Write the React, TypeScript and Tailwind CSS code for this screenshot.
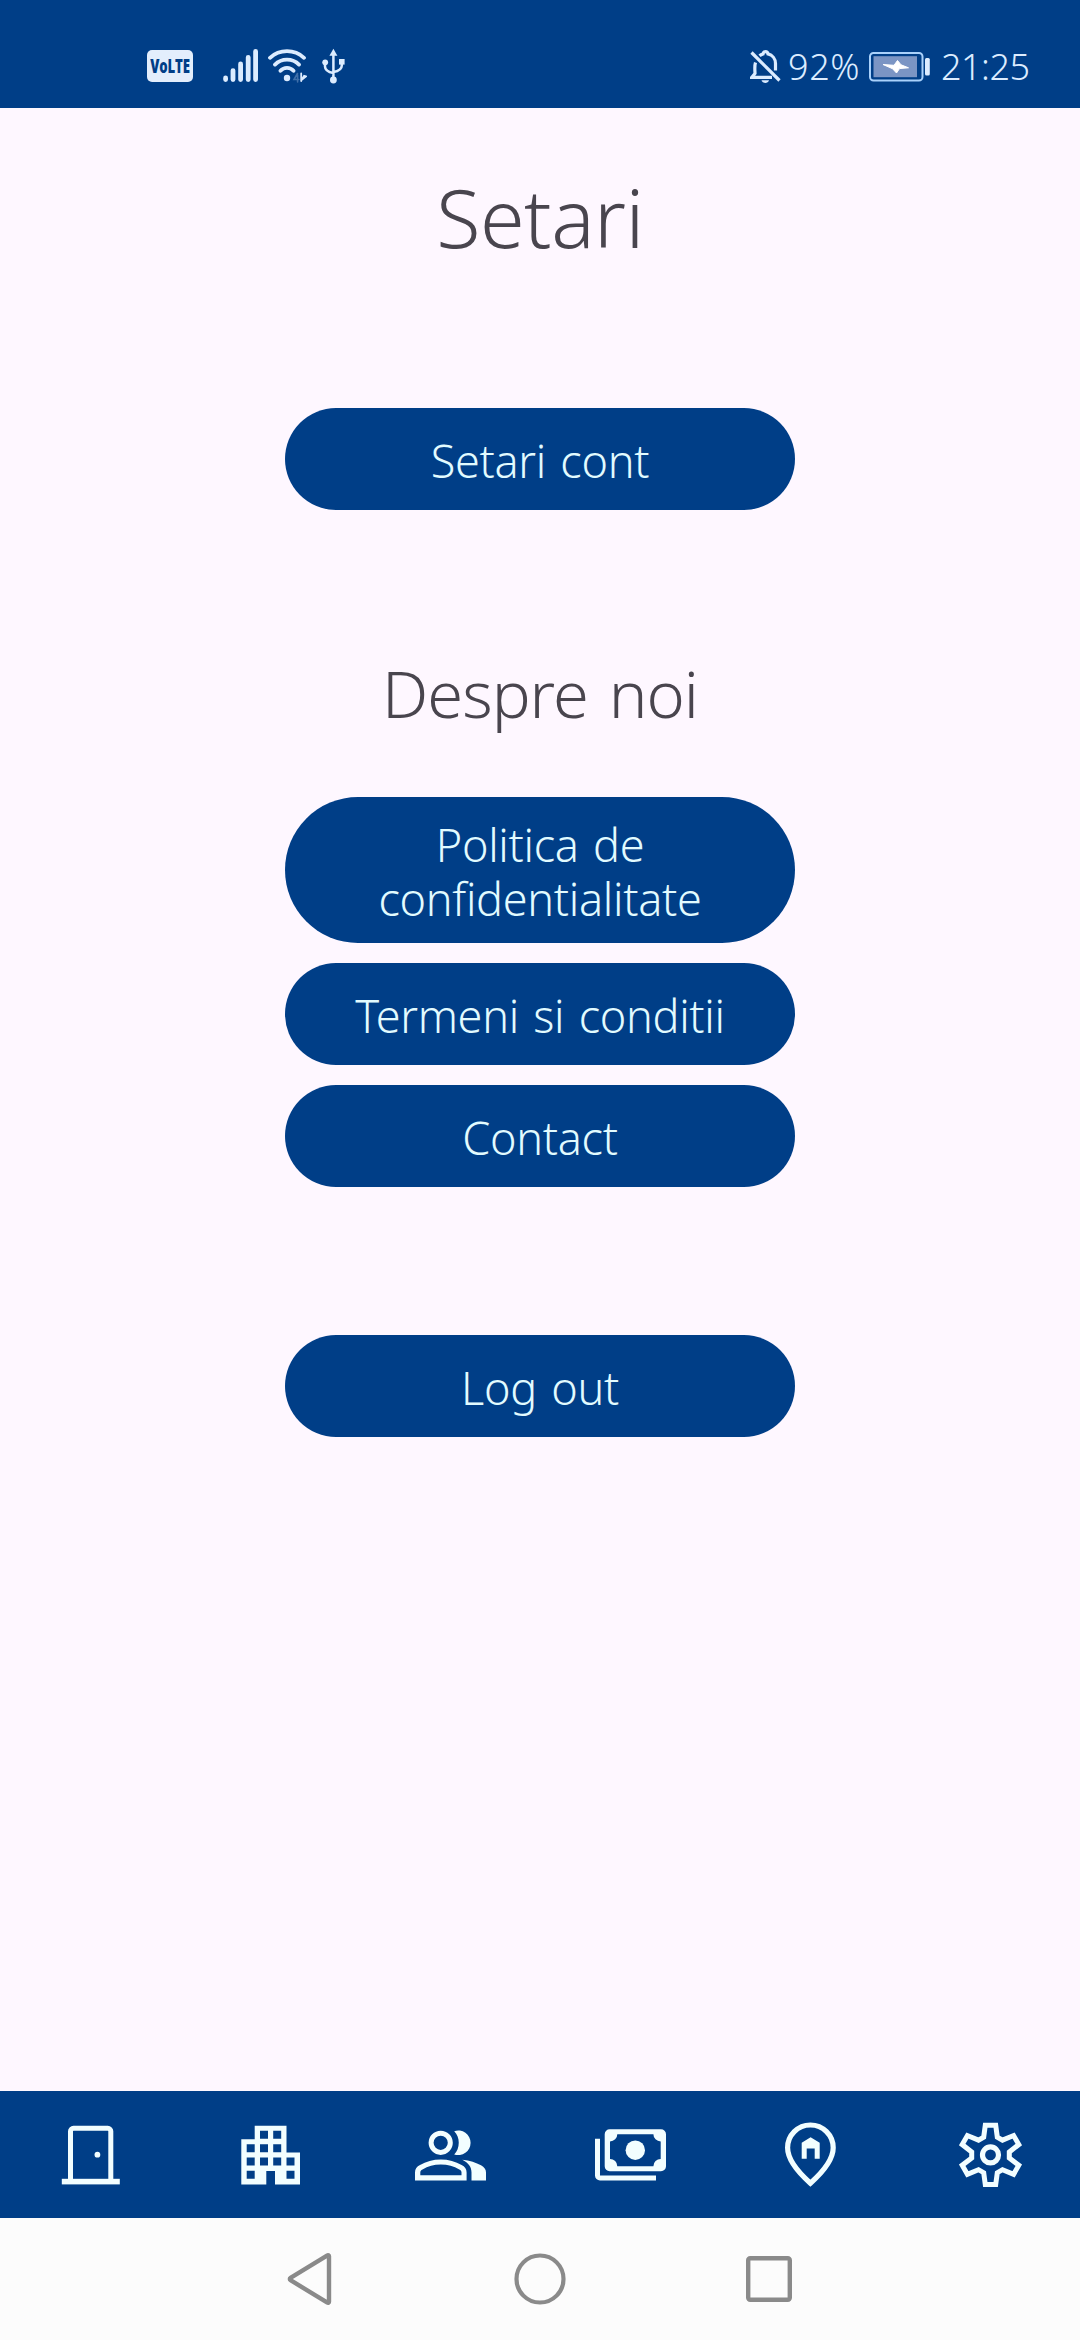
import React from "react";

function StatusBar() {
  return (
    <header className="flex h-[108px] shrink-0 items-center justify-between bg-[#003e87] pt-6 pr-[51px] pl-[147px] text-[#dcecff]">
      <div className="flex items-center">
        <div className="flex h-8 w-[46px] items-center justify-center rounded-[5px] bg-[#e3eefc]">
          <span className="inline-block origin-center scale-x-[0.66] text-[20px] leading-none font-black text-[#003e87]">VoLTE</span>
        </div>
        <svg className="ml-[30px] h-9 w-[35px]" viewBox="0 0 35 36" fill="none" stroke="currentColor" strokeWidth="4.8" strokeLinecap="round">
          <path d="M2.6 30v1.6M10 22.6v9M17.6 16v15.6M25.2 9.4v22.2M32.6 3.4v28.2" />
        </svg>
        <svg className="ml-2.5 h-9 w-[39px]" viewBox="0 0 39 36" fill="none" stroke="currentColor" strokeWidth="3.8" strokeLinecap="round">
          <path d="M2 9.800C11.500 1 26.500 1 36 9.800M7 16.600C13.500 10 24.500 10 31 16.600M12.500 22.800C16 18.800 22 18.800 25.500 22.800" />
          <circle cx="19" cy="30" r="3.2" fill="currentColor" stroke="none" />
          <path d="M29.500 25.500l-3.500 6h4.800M29.600 27v7" stroke="#3f6fa9" strokeWidth="1.6" />
          <path d="M33.200 25.500v7.500M33.500 32l4.600-3.600-2-.6z" strokeWidth="1.800" fill="currentColor" />
        </svg>
        <svg className="ml-[15px] h-9 w-6" viewBox="0 0 24 36" fill="none" stroke="currentColor" strokeWidth="2.500">
          <path d="M11.400 5v26M3 15v3.500c0 3.500 2.500 5.500 8.400 6.500M19.800 13v4.500c0 3.500-2.500 5.500-8.400 6.500" />
          <path d="M11.400.800L15.400 7.800H7.400z" fill="currentColor" stroke="none" />
          <circle cx="3.200" cy="14.300" r="2.900" fill="currentColor" stroke="none" />
          <rect x="17" y="11" width="5.600" height="5.600" fill="currentColor" stroke="none" />
          <circle cx="11.400" cy="32" r="3.400" fill="currentColor" stroke="none" />
        </svg>
      </div>
      <div className="flex items-center text-[36px] leading-9 font-[270]">
        <svg className="h-9 w-8" viewBox="0 0 32 36" fill="none" stroke="currentColor" strokeWidth="3.200">
          <path d="M1.500 4.500L29.500 32.500" />
          <path d="M5.500 14.500C4.300 18 5 23 5 25.500L1.800 29.300H22M9.500 7.800C11 6.500 12 6.200 13 5.900C13.500 2.800 17.500 2.800 18 5.900C22.500 7 25.500 11 25.500 15.500V22.500" />
          <path d="M11.500 32.200h7.500c-.5 1.700-2 2.800-3.700 2.800s-3.300-1.100-3.800-2.800z" fill="currentColor" stroke="none" />
        </svg>
        <span className="ml-1.5 w-[73px] pt-px tracking-[0.6px] whitespace-nowrap">92%</span>
        <svg className="ml-2 h-9 w-[62px]" viewBox="0 0 62 36">
          <rect x="1" y="4.900" width="52.500" height="27.600" rx="3.500" fill="none" stroke="#a9d1fb" strokeWidth="2" />
          <rect x="4.500" y="8.200" width="43.500" height="21" fill="#7b95c4" />
          <path d="M14 16.500L25 17.300L28.500 12.500L32 16.800L39.500 19.800L30.500 20.600L27.500 25L23.500 20.700z" fill="#fff" stroke="#fff" strokeLinejoin="round" />
          <rect x="56" y="10" width="4.800" height="17.500" rx="1.500" fill="currentColor" />
        </svg>
        <span className="ml-2.5 w-[88px] pt-px tracking-[-0.5px] whitespace-nowrap">21:25</span>
      </div>
    </header>
  );
}

function PillButton({ children, tall = false }: { children: React.ReactNode; tall?: boolean }) {
  return (
    <button
      className={
        "flex w-[510px] shrink-0 flex-col items-center justify-center rounded-full bg-[#003e87] pt-[3px] text-center text-[45px] leading-[54px] font-[270] tracking-[-0.3px] text-[#e2fbff] [word-spacing:3px] " +
        (tall ? "h-[146px]" : "h-[102px]")
      }
    >
      {children}
    </button>
  );
}

const icons: { name: string; art: React.ReactNode }[] = [
  {
    name: "Door",
    art: (
      <>
        <path d="M20.500 66V16.300a3 3 0 0 1 3-3h34.300a3 3 0 0 1 3 3V66" fill="none" stroke="currentColor" strokeWidth="5" />
        <rect x="11.800" y="63.800" width="58" height="5.600" />
        <circle cx="47.400" cy="39.700" r="2.900" />
      </>
    ),
  },
  {
    name: "Building",
    art: (
      <path
        fillRule="evenodd"
        d="M11.300 24.300H24.700V10.800H56.500V37.500H70V69.500H45V56H36.300V69.500H11.300ZM30 15.800v8h8v-8zM43.200 15.800v8h8v-8zM16.700 29.200v8h8v-8zM30 29.200v8h8v-8zM43.200 29.200v8h8v-8zM16.700 42.400v8h8v-8zM30 42.400v8h8v-8zM43.200 42.400v8h8v-8zM56.500 42.400v8h8v-8zM16.700 55.700v8h8v-8zM56.500 55.700v8h8v-8z"
      />
    ),
  },
  {
    name: "People",
    art: (
      <>
        <circle cx="30.700" cy="27.800" r="9.600" fill="none" stroke="currentColor" strokeWidth="5" />
        <path d="M44.200 16.200A12.300 12.300 0 1 1 44.200 39.400C50.300 33.500 50.300 22 44.200 16.200Z" />
        <path
          fillRule="evenodd"
          d="M5 65.500V57.500c0-3.500 1.800-6 5-7.500C16 46.500 23 44.500 30.800 44.500s14.800 2 20.800 5.500c3.200 1.500 5 4 5 7.500v8ZM10.300 60.300H51.500v-3c0-1.200-.7-2-2.200-2.800C43.800 51.200 37.800 49.600 30.800 49.600S18 51.200 12.500 54.500c-1.500.8-2.200 1.600-2.200 2.800Z"
        />
        <path d="M52.300 44.800C60 45.600 66 47.800 71 50.300c3.300 1.800 5 4.200 5 7.200v8H61.500v-8C61.500 52 58.500 48 52.300 44.800Z" />
      </>
    ),
  },
  {
    name: "Payments",
    art: (
      <>
        <path
          fillRule="evenodd"
          d="M19.700 14.200H71a5 5 0 0 1 5 5V51.200a5 5 0 0 1-5 5H19.700a5 5 0 0 1-5-5V19.200a5 5 0 0 1 5-5ZM27.300 19.200A7.300 7.300 0 0 1 20 26.500V43.900A7.300 7.300 0 0 1 27.300 51.200H63.400A7.300 7.300 0 0 1 70.700 43.900V26.500A7.300 7.300 0 0 1 63.400 19.200Z"
        />
        <circle cx="45.300" cy="35.200" r="9.700" />
        <path d="M5 23.800h5v36.700h56v5H10a5 5 0 0 1-5-5Z" />
      </>
    ),
  },
  {
    name: "Location",
    art: (
      <>
        <path d="M40.400 68.200C25 54.500 17.600 43.500 17.600 32.800A22.800 22.800 0 0 1 63.200 32.800C63.200 43.500 55.800 54.500 40.400 68.200Z" fill="none" stroke="currentColor" strokeWidth="5.200" />
        <path d="M31.700 43.800V27.800L40.600 22.200L49.700 27.800V43.800H44.700V33.500H36.700V43.800Z" />
      </>
    ),
  },
  {
    name: "Settings",
    art: (
      <g transform="translate(40.500 39.900)" fill="none" stroke="currentColor" strokeWidth="5">
        <circle r="8" strokeWidth="5.200" />
        <path d="M-6.800-17.800L-5.200-29.700H5.200L6.800-17.800L12-14.800L23.100-19.350L28.300-10.350L18.800-3V3L28.300 10.350L23.100 19.350L12 14.800L6.800 17.800L5.200 29.700H-5.200L-6.800 17.800L-12 14.800L-23.100 19.350L-28.300 10.350L-18.800 3V-3L-28.300-10.350L-23.100-19.350L-12-14.800Z" />
      </g>
    ),
  },
];

function BottomNav() {
  return (
    <nav className="grid h-[127px] shrink-0 grid-cols-6 items-center justify-items-center bg-[#003e87] text-[#f2feff]">
      {icons.map((icon) => (
        <button key={icon.name} aria-label={icon.name}>
          <svg className="h-20 w-20" viewBox="0 0 80 80" fill="currentColor">
            {icon.art}
          </svg>
        </button>
      ))}
    </nav>
  );
}

function SystemNav() {
  return (
    <footer className="flex h-[122px] shrink-0 items-center justify-center gap-[170px] bg-[#fcfcfc] text-[#8a8a8a]">
      <svg className="h-[60px] w-[60px]" viewBox="0 0 60 60" fill="none" stroke="currentColor" strokeWidth="4.400" strokeLinejoin="round">
        <path d="M49 7.200V52.800a1 1 0 0 1-1.600.8L10.500 31.200a1.400 1.400 0 0 1 0-2.400L47.400 6.400A1 1 0 0 1 49 7.200Z" />
      </svg>
      <svg className="h-[60px] w-[60px]" viewBox="0 0 60 60" fill="none" stroke="currentColor" strokeWidth="4.200">
        <circle cx="30" cy="30" r="23.500" />
      </svg>
      <svg className="h-[60px] w-[60px]" viewBox="0 0 60 60" fill="none" stroke="currentColor" strokeWidth="4.400">
        <rect x="8.200" y="9.200" width="41.600" height="41.600" rx="2" />
      </svg>
    </footer>
  );
}

export default function App() {
  return (
    <div className="flex h-[2340px] w-[1080px] flex-col overflow-hidden bg-[#fef7ff] font-['Noto_Sans',sans-serif]">
      <StatusBar />
      <main className="flex flex-1 flex-col items-center text-[#49454e]">
        <h1 className="mt-[59px] text-[81px] leading-[100px] font-[270] tracking-[-0.5px]">Setari</h1>
        <div className="mt-[141px]">
          <PillButton>Setari cont</PillButton>
        </div>
        <h2 className="mt-[143px] text-[65px] leading-[80px] font-[260] tracking-[-1px] [word-spacing:5px]">Despre noi</h2>
        <div className="mt-16 flex flex-col gap-5">
          <PillButton tall>
            <span>Politica de</span>
            <span>confidentialitate</span>
          </PillButton>
          <PillButton>Termeni si conditii</PillButton>
          <PillButton>Contact</PillButton>
        </div>
        <div className="mt-[148px]">
          <PillButton>Log out</PillButton>
        </div>
      </main>
      <BottomNav />
      <SystemNav />
    </div>
  );
}
